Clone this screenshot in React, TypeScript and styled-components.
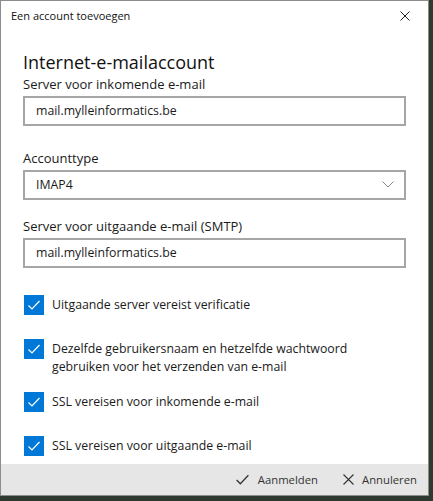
import styled, { createGlobalStyle } from 'styled-components';

const GlobalStyle = createGlobalStyle`
  html, body {
    margin: 0;
    padding: 0;
    background: #2e3a2f;
  }
  body {
    font-family: 'Open Sans', 'Noto Sans', sans-serif;
    color: #1a1a1a;
  }
`;

const Window = styled.div`
  width: 429px;
  height: 496px;
  background: #fff;
  border: 1px solid #8c8c8c;
  display: flex;
  flex-direction: column;
  box-sizing: border-box;
`;

const TitleBar = styled.div`
  height: 33px;
  display: flex;
  align-items: center;
  justify-content: space-between;
  padding: 0 18px 0 10px;
  font-size: 11px;
  color: #111;
`;

const Content = styled.div`
  flex: 1;
  padding: 0 22px 0 22px;
  display: flex;
  flex-direction: column;
`;

const Heading = styled.h1`
  margin: 19px 0 0;
  font-size: 18px;
  font-weight: 400;
  line-height: 24px;
  color: #111;
`;

const Label = styled.div`
  font-size: 13px;
  line-height: 20px;
  margin-bottom: 2px;
  color: #1a1a1a;
`;

const Field = styled.div<{ $gap: number }>`
  height: 30px;
  border: 2px solid #a6a6a6;
  box-sizing: border-box;
  display: flex;
  align-items: center;
  justify-content: space-between;
  padding: 0 10px 0 11px;
  font-size: 12.3px;
  color: #1a1a1a;
  margin-bottom: ${(p) => p.$gap}px;
`;

const Checks = styled.div`
  display: flex;
  flex-direction: column;
  gap: 16px;
`;

const CheckRow = styled.label`
  display: flex;
  align-items: flex-start;
  gap: 8px;
  min-height: 28px;
  padding-left: 1px;
`;

const Box = styled.span`
  width: 20px;
  height: 20px;
  flex: 0 0 20px;
  background: #0078d7;
  display: flex;
  align-items: center;
  justify-content: center;
`;

const CheckText = styled.span`
  font-size: 12.3px;
  line-height: 18px;
  padding-top: 1px;
  color: #1a1a1a;
`;

const Footer = styled.div`
  height: 35px;
  background: #e6e6e6;
  display: flex;
  align-items: center;
  justify-content: flex-end;
  gap: 25px;
  padding-right: 11px;
`;

const FooterButton = styled.button`
  border: 0;
  background: transparent;
  display: flex;
  align-items: center;
  gap: 8px;
  font-family: inherit;
  font-size: 11.3px;
  color: #333;
  padding: 0;
`;

const CheckMark = ({ color = '#fff', size = 14 }: { color?: string; size?: number }) => (
  <svg width={size} height={size} viewBox="0 0 14 14" fill="none">
    <path d="M1.5 7.5 L5 11 L12.5 3" stroke={color} strokeWidth={1.2} />
  </svg>
);

const Cross = ({ size = 11, color = '#333' }: { size?: number; color?: string }) => (
  <svg width={size} height={size} viewBox="0 0 11 11" fill="none">
    <path d="M0.5 0.5 L10.5 10.5 M10.5 0.5 L0.5 10.5" stroke={color} strokeWidth={1.1} />
  </svg>
);

const Chevron = () => (
  <svg width="12" height="7" viewBox="0 0 12 7" fill="none">
    <path d="M0.5 0.5 L6 6 L11.5 0.5" stroke="#888" strokeWidth={1} />
  </svg>
);

const options = [
  'Uitgaande server vereist verificatie',
  'Dezelfde gebruikersnaam en hetzelfde wachtwoord gebruiken voor het verzenden van e-mail',
  'SSL vereisen voor inkomende e-mail',
  'SSL vereisen voor uitgaande e-mail'
];

const App = () => {
  return (
    <>
      <GlobalStyle />
      <Window>
        <TitleBar>
          <span>Een account toevoegen</span>
          <Cross size={10} color="#222" />
        </TitleBar>
        <Content>
          <Heading>Internet-e-mailaccount</Heading>
          <Label>Server voor inkomende e-mail</Label>
          <Field $gap={22}>mail.mylleinformatics.be</Field>
          <Label>Accounttype</Label>
          <Field $gap={16}>
            IMAP4
            <Chevron />
          </Field>
          <Label>Server voor uitgaande e-mail (SMTP)</Label>
          <Field $gap={27}>mail.mylleinformatics.be</Field>
          <Checks>
            {options.map((o) => (
              <CheckRow key={o}>
                <Box>
                  <CheckMark />
                </Box>
                <CheckText>{o}</CheckText>
              </CheckRow>
            ))}
          </Checks>
        </Content>
        <Footer>
          <FooterButton>
            <CheckMark color="#333" size={15} />
            Aanmelden
          </FooterButton>
          <FooterButton>
            <Cross />
            Annuleren
          </FooterButton>
        </Footer>
      </Window>
    </>
  );
};

export default App;
